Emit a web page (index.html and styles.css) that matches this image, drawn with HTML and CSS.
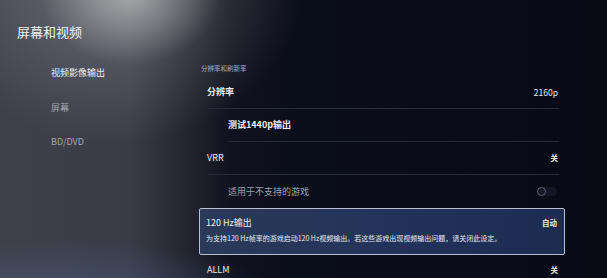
FILE: index.html
```html
<!DOCTYPE html>
<html lang="zh-CN">
<head>
<meta charset="utf-8">
<title>屏幕和视频</title>
<link rel="stylesheet" href="styles.css">
</head>
<body>
<div class="screen">
  <aside class="side">
    <h1 class="title">屏幕和视频</h1>
    <ul class="menu">
      <li class="menu-item active">视频影像输出</li>
      <li class="menu-item">屏幕</li>
      <li class="menu-item">BD/DVD</li>
    </ul>
  </aside>
  <main class="panel">
    <div class="section-head">分辨率和刷新率</div>
    <div class="row"><span class="label strong">分辨率</span><span class="value light">2160p</span></div>
    <div class="row sub"><span class="label strong">测试1440p输出</span></div>
    <div class="row"><span class="label">VRR</span><span class="value">关</span></div>
    <div class="row sub noline"><span class="label dim">适用于不支持的游戏</span><span class="toggle"><span class="knob"></span></span></div>
    <div class="focus">
      <div class="focus-top"><span class="label">120 Hz输出</span><span class="value">自动</span></div>
      <div class="desc">为支持120 Hz帧率的游戏启动120 Hz视频输出。若这些游戏出现视频输出问题，请关闭此设定。</div>
    </div>
    <div class="row noline last"><span class="label">ALLM</span><span class="value">关</span></div>
  </main>
</div>
</body>
</html>
```
FILE: styles.css
```css
* { box-sizing: border-box; }
html, body { margin: 0; padding: 0; }
body {
  width: 607px;
  height: 278px;
  overflow: hidden;
  font-family: "Noto Sans CJK SC", "Noto Sans", sans-serif;
  color: #e9eaee;
}
.screen {
  width: 607px;
  height: 278px;
  display: grid;
  grid-template-columns: 199px 366px 1fr;
  background:
    radial-gradient(ellipse 90px 70px at 130px -5px, rgba(220,220,220,0.55), rgba(220,220,220,0) 100%),
    radial-gradient(ellipse 190px 170px at 115px -25px, rgba(165,165,168,0.45), rgba(165,165,168,0) 100%),
    radial-gradient(ellipse 220px 60px at 60px 300px, rgba(80,100,145,0.55), rgba(80,100,145,0) 100%),
    linear-gradient(to right, #3e4049 0px, #393c47 130px, #23262f 185px, #10131f 230px, #0a0d1a 300px, #080a16 100%);
}
.side {
  padding-top: 23px;
}
.title {
  margin: 0 0 0 17px;
  font-size: 13px;
  line-height: 18px;
  font-weight: 400;
  color: #f2f2f2;
}
.menu {
  list-style: none;
  margin: 26px 0 0 0;
  padding: 0 0 0 51px;
}
.menu-item {
  font-size: 9px;
  line-height: 12px;
  height: 34.5px;
  color: #a4a6ad;
}
.menu-item.active { color: #eeeef2; }
.panel {
  padding-top: 61px;
  display: flex;
  flex-direction: column;
}
.section-head {
  font-size: 6.5px;
  line-height: 14px;
  height: 15px;
  margin-left: 2px;
  color: #a7abb5;
}
.row {
  height: 33px;
  margin: 0 6px 0 8px;
  border-bottom: 1px solid #272c3b;
  display: flex;
  align-items: center;
  justify-content: space-between;
}
.row.sub { margin-left: 29px; }
.row.noline { border-bottom: none; }
.row.last { height: 29px; }
.label {
  font-size: 9px;
  line-height: 12px;
  color: #eceef2;
}
.label.strong { font-weight: 700; }
.label.dim { color: #9ea3ae; }
.value {
  font-size: 7.5px;
  line-height: 10px;
  font-weight: 700;
  color: #e6e8ee;
  margin-right: 1px;
}
.value.light {
  font-size: 8.5px;
  font-weight: 400;
}
.toggle {
  width: 20px;
  height: 9px;
  border-radius: 5px;
  background: #141826;
  display: flex;
  align-items: center;
  margin-right: 2px;
}
.knob {
  width: 9px;
  height: 9px;
  border-radius: 50%;
  border: 1.5px solid #5d626e;
}
.focus {
  height: 47px;
  border: 1.5px solid #b7bfd2;
  border-radius: 2px;
  background: linear-gradient(to right, #2b3a58 0%, #22315a 60%, #1c2b50 100%);
  padding: 7px 6px 0 6px;
  display: flex;
  flex-direction: column;
}
.focus-top {
  display: flex;
  align-items: center;
  justify-content: space-between;
  height: 14px;
}
.desc {
  margin-top: 3px;
  font-size: 7px;
  line-height: 11px;
  color: #e8eaf0;
  white-space: nowrap;
}
```
